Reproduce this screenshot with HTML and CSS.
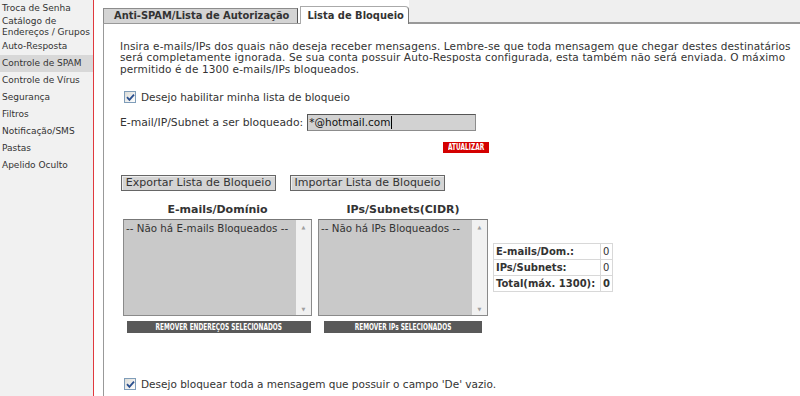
FILE: index.html
```html
<!DOCTYPE html>
<html lang="pt-BR">
<head>
  <meta charset="UTF-8" />
  <title>Controle de SPAM - Lista de Bloqueio</title>
  <link rel="stylesheet" href="styles.css">
</head>
<body>
  <div class="page">

    <!-- Menu lateral -->
    <ul class="sidebar">
      <li class="first">Troca de Senha</li>
      <li class="second">Catálogo de Endereços / Grupos</li>
      <li class="third">Auto-Resposta</li>
      <li class="current">Controle de SPAM</li>
      <li>Controle de Vírus</li>
      <li>Segurança</li>
      <li>Filtros</li>
      <li>Notificação/SMS</li>
      <li>Pastas</li>
      <li>Apelido Oculto</li>
    </ul>

    <div class="main">
      <!-- Abas -->
      <div class="tabs">
        <a href="#" class="tab">Anti-SPAM/Lista de Autorização</a>
        <a href="#" class="tab active">Lista de Bloqueio</a>
        <div class="tab-fill"></div>
      </div>

      <div class="panel">
        <p class="intro">Insira e-mails/IPs dos quais não deseja receber mensagens. Lembre-se que toda mensagem que chegar destes destinatários será completamente ignorada. Se sua conta possuir Auto-Resposta configurada, esta também não será enviada. O máximo permitido é de 1300 e-mails/IPs bloqueados.</p>

        <label class="check-row">
          <span class="checkbox"><svg width="9" height="9" viewBox="0 0 9 9"><path d="M1 4.2 L3.4 6.8 L8 1.6" fill="none" stroke="#2a4f8f" stroke-width="1.8"/></svg></span>
          Desejo habilitar minha lista de bloqueio
        </label>

        <div class="field-row">
          <span class="field-label">E-mail/IP/Subnet a ser bloqueado:</span>
          <div class="text-input">*@hotmail.com<span class="caret"></span></div>
        </div>

        <div class="update-row">
          <a href="#" class="btn-red"><span>ATUALIZAR</span></a>
        </div>

        <div class="export-row">
          <button class="btn-gray">Exportar Lista de Bloqueio</button>
          <button class="btn-gray">Importar Lista de Bloqueio</button>
        </div>

        <div class="lists">
          <div class="list-col col-emails">
            <h4>E-mails/Domínio</h4>
            <div class="listbox">
              <div class="list-items">-- Não há E-mails Bloqueados --</div>
              <div class="scrollbar"><span>&#9650;</span><span>&#9660;</span></div>
            </div>
            <a href="#" class="btn-dark"><span>REMOVER ENDEREÇOS SELECIONADOS</span></a>
          </div>

          <div class="list-col col-ips">
            <h4>IPs/Subnets(CIDR)</h4>
            <div class="listbox">
              <div class="list-items">-- Não há IPs Bloqueados --</div>
              <div class="scrollbar"><span>&#9650;</span><span>&#9660;</span></div>
            </div>
            <a href="#" class="btn-dark"><span>REMOVER IPs SELECIONADOS</span></a>
          </div>

          <table class="stats">
            <tr><th>E-mails/Dom.:</th><td>0</td></tr>
            <tr><th>IPs/Subnets:</th><td>0</td></tr>
            <tr><th>Total(máx. 1300):</th><td class="total">0</td></tr>
          </table>
        </div>

        <label class="check-row bottom">
          <span class="checkbox"><svg width="9" height="9" viewBox="0 0 9 9"><path d="M1 4.2 L3.4 6.8 L8 1.6" fill="none" stroke="#2a4f8f" stroke-width="1.8"/></svg></span>
          Desejo bloquear toda a mensagem que possuir o campo 'De' vazio.
        </label>
      </div>
    </div>
  </div>
</body>
</html>
```

FILE: styles.css
```css
:root {
  --text: #333333;
  --border: #999999;
  --red: #d40000;
  --sidebar-bg: #f1f1f1;
}

* {
  margin: 0;
  padding: 0;
  box-sizing: border-box;
}

body {
  font-family: 'DejaVu Sans', Verdana, sans-serif;
  font-size: 10.5px;
  color: var(--text);
  background: white;
}

.page {
  display: flex;
  height: 396px;
  overflow: hidden;
}

/* Sidebar */
.sidebar {
  list-style: none;
  width: 94px;
  flex-shrink: 0;
  background: var(--sidebar-bg);
  border-right: 1px solid #e0393e;
  font-size: 9px;
  line-height: 11px;
}

.sidebar li {
  padding: 3px 2px;
}

.sidebar li.first { padding: 3px 2px 1px; }
.sidebar li.second { padding: 1px 2px 1px; }
.sidebar li.third { padding: 2px 2px 3px; }

.sidebar li.current {
  background: #d8d8d8;
}

/* Main */
.main {
  flex: 1;
  padding-left: 9px;
  display: flex;
  flex-direction: column;
}

.tabs {
  display: flex;
  align-items: flex-end;
  height: 23px;
}

.tab {
  font-family: 'DejaVu Sans Condensed', 'DejaVu Sans', sans-serif;
  font-weight: bold;
  font-size: 11px;
  color: #333;
  text-decoration: none;
  height: 15px;
  line-height: 14px;
  padding: 0 8px 0 10px;
  background: #d4d4d4;
  border: 1px solid #8c8c8c;
  border-right-color: #555;
  border-bottom: none;
  margin-right: 2px;
}

.tab.active {
  background: white;
  height: 18px;
  line-height: 17px;
  padding: 0 4px 0 6px;
  margin-right: 0;
  border-color: #aaa;
  border-right-color: #777;
  border-top-right-radius: 4px;
  position: relative;
  top: 1px;
}

.tab-fill {
  flex: 1;
  align-self: stretch;
  background: #efefef;
  border-bottom: 1px solid var(--border);
}

.panel {
  flex: 1;
  border-left: 1px solid var(--border);
  border-top: 1px solid var(--border);
  padding: 17px 8px 0 16px;
}

.intro {
  line-height: 11.3px;
  letter-spacing: 0.12px;
}

.check-row {
  display: flex;
  align-items: center;
  gap: 5px;
  margin-top: 16px;
  height: 13px;
  padding-left: 4px;
}

.checkbox {
  width: 12px;
  height: 12px;
  border: 1px solid #7f9db9;
  background: linear-gradient(135deg, #dcdcd7, #ffffff);
  display: flex;
  align-items: center;
  justify-content: center;
}

.field-row {
  display: flex;
  align-items: center;
  gap: 4px;
  margin-top: 10px;
}

.field-label {
  font-size: 10.8px;
}

.text-input {
  width: 169px;
  height: 17px;
  background: #d2d2d2;
  border: 1px solid #8c8c8c;
  border-top-color: #555;
  border-left-color: #555;
  font-size: 10.5px;
  line-height: 15px;
  padding-left: 1px;
  color: #111;
  display: flex;
  align-items: center;
}

.caret {
  width: 1px;
  height: 13px;
  background: #000;
  margin-left: 1px;
}

.update-row {
  margin-top: 11px;
  padding-left: 323px;
  height: 11px;
}

.btn-red,
.btn-dark {
  display: flex;
  align-items: center;
  justify-content: center;
  color: white;
  text-decoration: none;
  font-family: 'DejaVu Sans Condensed', 'DejaVu Sans', sans-serif;
  font-weight: bold;
  font-size: 9px;
  overflow: hidden;
  white-space: nowrap;
}

.btn-red span,
.btn-dark span {
  display: inline-block;
  transform: scaleX(0.72);
}

.btn-red {
  width: 46px;
  height: 11px;
  background: var(--red);
}

.export-row {
  display: flex;
  gap: 14px;
  margin-top: 22px;
  padding-left: 1px;
}

.btn-gray {
  font-family: inherit;
  font-size: 11px;
  color: #333;
  width: 155px;
  height: 16px;
  line-height: 14px;
  background: #d4d4d4;
  border: 1px solid #666;
  box-shadow: inset 1px 1px 0 #eee;
}

/* Listas */
.lists {
  display: flex;
  align-items: center;
  margin-top: 12px;
  padding-left: 3px;
}

.list-col h4 {
  text-align: center;
  font-size: 11px;
  line-height: 13px;
  margin-bottom: 3px;
}

.col-emails { width: 189px; }
.col-ips { width: 170px; margin-left: 6px; }

.listbox {
  display: flex;
  height: 97px;
  border: 1px solid #8a8a8a;
  border-top-color: #777;
  background: #c9c9c9;
}

.list-items {
  flex: 1;
  font-size: 10.3px;
  padding: 2px 2px;
  line-height: 13px;
  white-space: nowrap;
  overflow: hidden;
}

.scrollbar {
  width: 15px;
  background: #f1f1f1;
  display: flex;
  flex-direction: column;
  justify-content: space-between;
  align-items: center;
  font-size: 5px;
  color: #a0a0a0;
  padding: 4px 0 3px;
}

.btn-dark {
  height: 12px;
  margin-top: 5px;
  background: #595959;
  font-size: 9px;
}

.col-emails .btn-dark { margin-left: 4px; width: 184px; }
.col-ips .btn-dark { margin-left: 6px; width: 158px; }

.stats {
  margin-left: 5px;
  border-collapse: collapse;
  border: 1px solid #d8d8d8;
  font-size: 10px;
}

.stats th,
.stats td {
  border: 1px solid #d8d8d8;
  height: 16px;
  padding: 0 2px;
  text-align: left;
}

.stats th { width: 107px; }
.stats td { width: 12px; font-weight: normal; }
.stats td.total { font-weight: bold; }

.check-row.bottom {
  margin-top: 45px;
}
```
